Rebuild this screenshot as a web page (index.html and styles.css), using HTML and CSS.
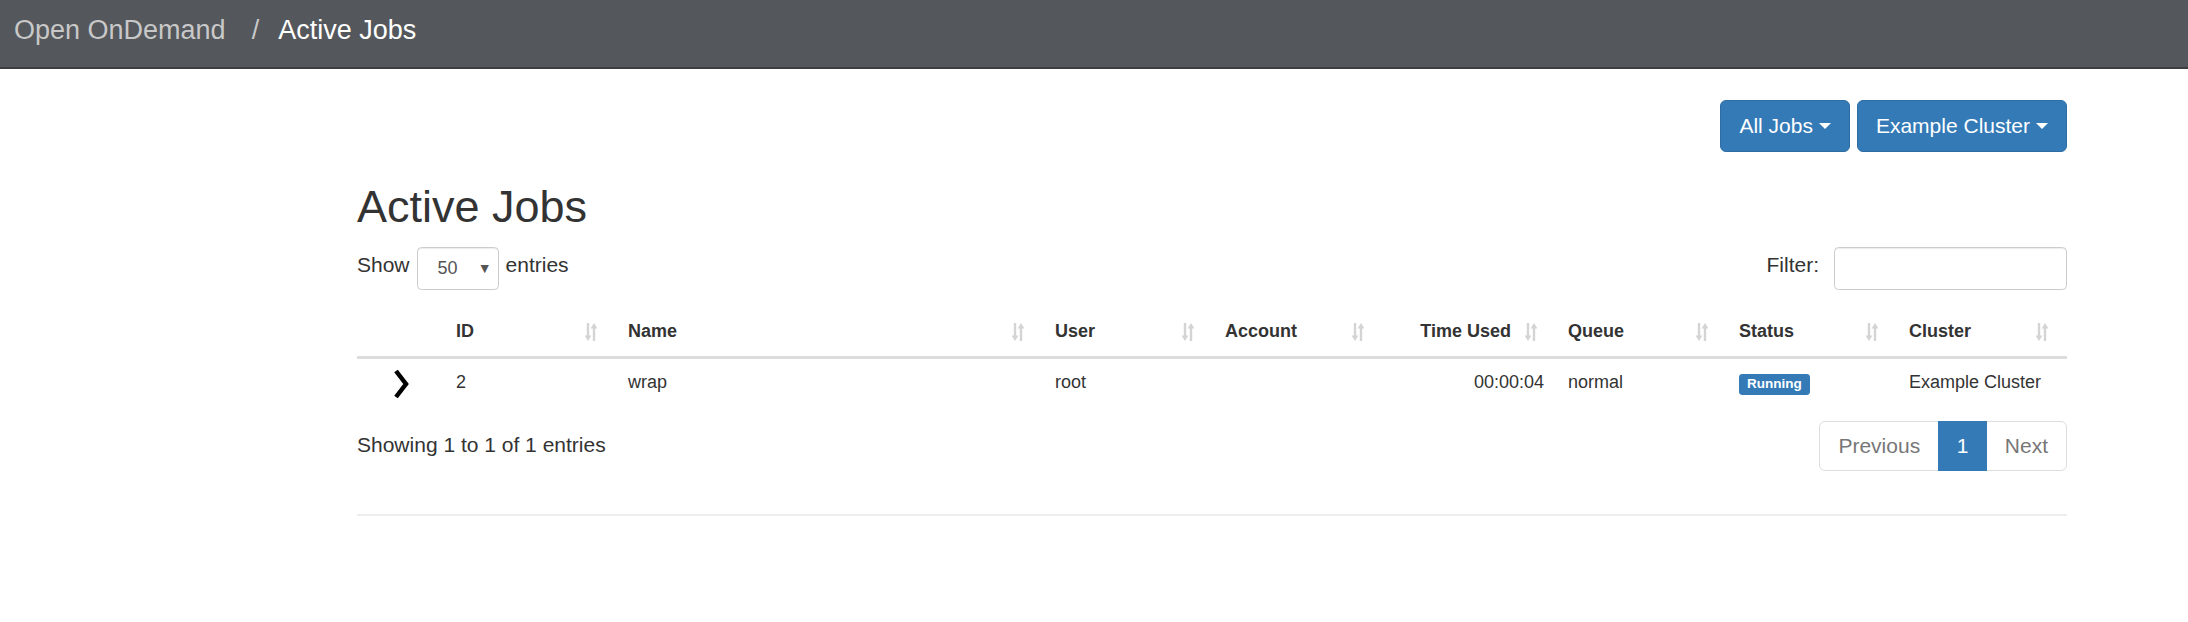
FILE: index.html
```html
<!DOCTYPE html>
<html lang="en">
<head>
<meta charset="utf-8">
<title>Active Jobs</title>
<link rel="stylesheet" href="styles.css">
</head>
<body>
<header class="navbar">
  <span class="brand">Open OnDemand</span><span class="sep">/</span><span class="crumb">Active Jobs</span>
</header>
<main class="container">
  <div class="toolbar">
    <button class="btn">All Jobs <span class="caret"></span></button>
    <button class="btn">Example Cluster <span class="caret"></span></button>
  </div>
  <h1 class="title">Active Jobs</h1>
  <div class="dt-controls">
    <div class="length"><span class="lbl">Show</span><span class="select"><span class="val">50</span><span class="arrow">▼</span></span><span class="lbl">entries</span></div>
    <div class="filter"><span class="lbl">Filter:</span><span class="input"></span></div>
  </div>
  <table class="jobs">
    <colgroup>
      <col class="c0"><col class="c1"><col class="c2"><col class="c3"><col class="c4"><col class="c5"><col class="c6"><col class="c7"><col class="c8">
    </colgroup>
    <thead>
      <tr>
        <th class="nosort"></th>
        <th>ID<svg class="sort" viewBox="0 0 12 18"><path d="M1.8 0h2.4v12.5h2.2L3 18 -0.4 12.5h2.2z M9 0 12.4 5.5H10.2V18H7.8V5.5H5.6z"/></svg></th>
        <th>Name<svg class="sort" viewBox="0 0 12 18"><path d="M1.8 0h2.4v12.5h2.2L3 18 -0.4 12.5h2.2z M9 0 12.4 5.5H10.2V18H7.8V5.5H5.6z"/></svg></th>
        <th>User<svg class="sort" viewBox="0 0 12 18"><path d="M1.8 0h2.4v12.5h2.2L3 18 -0.4 12.5h2.2z M9 0 12.4 5.5H10.2V18H7.8V5.5H5.6z"/></svg></th>
        <th>Account<svg class="sort" viewBox="0 0 12 18"><path d="M1.8 0h2.4v12.5h2.2L3 18 -0.4 12.5h2.2z M9 0 12.4 5.5H10.2V18H7.8V5.5H5.6z"/></svg></th>
        <th class="right">Time Used<svg class="sort" viewBox="0 0 12 18"><path d="M1.8 0h2.4v12.5h2.2L3 18 -0.4 12.5h2.2z M9 0 12.4 5.5H10.2V18H7.8V5.5H5.6z"/></svg></th>
        <th>Queue<svg class="sort" viewBox="0 0 12 18"><path d="M1.8 0h2.4v12.5h2.2L3 18 -0.4 12.5h2.2z M9 0 12.4 5.5H10.2V18H7.8V5.5H5.6z"/></svg></th>
        <th>Status<svg class="sort" viewBox="0 0 12 18"><path d="M1.8 0h2.4v12.5h2.2L3 18 -0.4 12.5h2.2z M9 0 12.4 5.5H10.2V18H7.8V5.5H5.6z"/></svg></th>
        <th>Cluster<svg class="sort" viewBox="0 0 12 18"><path d="M1.8 0h2.4v12.5h2.2L3 18 -0.4 12.5h2.2z M9 0 12.4 5.5H10.2V18H7.8V5.5H5.6z"/></svg></th>
      </tr>
    </thead>
    <tbody>
      <tr>
        <td class="toggle"><svg class="chev" viewBox="0 0 16 30"><polyline points="3,2 13,15 3,28"/></svg></td>
        <td>2</td>
        <td>wrap</td>
        <td>root</td>
        <td></td>
        <td class="right">00:00:04</td>
        <td>normal</td>
        <td><span class="label">Running</span></td>
        <td>Example Cluster</td>
      </tr>
    </tbody>
  </table>
  <div class="dt-footer">
    <div class="info">Showing 1 to 1 of 1 entries</div>
    <ul class="pagination">
      <li class="page disabled">Previous</li>
      <li class="page active">1</li>
      <li class="page disabled">Next</li>
    </ul>
  </div>
  <hr class="rule">
</main>
</body>
</html>
```
FILE: styles.css
```css
html, body {
  margin: 0;
  padding: 0;
  background: #ffffff;
}

body {
  font-family: "Liberation Sans", Arial, Helvetica, sans-serif;
  font-size: 21px;
  color: #333333;
}

.navbar {
  height: 60px;
  padding: 0 0 7px 14px;
  background: #54575c;
  border-bottom: 2px solid #3b3d41;
  display: flex;
  align-items: center;
  font-size: 27px;
  line-height: 60px;
}

.brand {
  color: #c8c8c8;
}

.sep {
  color: #c8c8c8;
  margin-left: 26px;
}

.crumb {
  color: #ffffff;
  margin-left: 19px;
}

.container {
  margin-left: 357px;
  width: 1710px;
}

.toolbar {
  display: flex;
  justify-content: flex-end;
  gap: 7px;
  margin-top: 31px;
}

.btn {
  font-family: inherit;
  font-size: 21px;
  color: #ffffff;
  background: #337ab7;
  border: 1.5px solid #2e6da4;
  border-radius: 6px;
  height: 52px;
  padding: 0 18px;
  display: inline-flex;
  align-items: center;
  gap: 6px;
}

.caret {
  display: inline-block;
  width: 0;
  height: 0;
  border-top: 6px solid #ffffff;
  border-left: 6px solid transparent;
  border-right: 6px solid transparent;
}

.title {
  font-size: 45px;
  font-weight: 500;
  line-height: 49.5px;
  margin: 30px 0 15px 0;
  color: #333333;
}

.dt-controls {
  display: flex;
  justify-content: space-between;
  align-items: center;
  height: 43px;
}

.length, .filter {
  display: flex;
  align-items: center;
  gap: 7px;
}

.filter {
  gap: 15px;
}

.lbl {
  margin-top: -6px;
}

.select {
  box-sizing: border-box;
  width: 82px;
  height: 43px;
  border: 1.5px solid #cccccc;
  border-radius: 4.5px;
  box-shadow: inset 0 1px 1px rgba(0, 0, 0, 0.075);
  display: flex;
  align-items: center;
  justify-content: space-between;
  padding: 0 6px 0 20px;
  font-size: 18px;
  color: #555555;
}

.arrow {
  font-size: 14px;
  color: #555555;
}

.input {
  box-sizing: border-box;
  width: 233px;
  height: 43px;
  border: 1.5px solid #cccccc;
  border-radius: 4.5px;
  box-shadow: inset 0 1px 1px rgba(0, 0, 0, 0.075);
}

.jobs {
  width: 1710px;
  table-layout: fixed;
  border-collapse: collapse;
  margin-top: 17px;
  font-size: 18px;
  line-height: 25.7px;
}

.c0 { width: 87px; }
.c1 { width: 172px; }
.c2 { width: 427px; }
.c3 { width: 170px; }
.c4 { width: 170px; }
.c5 { width: 173px; }
.c6 { width: 171px; }
.c7 { width: 170px; }
.c8 { width: 170px; }

.jobs th {
  position: relative;
  text-align: left;
  font-weight: bold;
  padding: 12px 45px 12px 12px;
  border-bottom: 3px solid #dddddd;
  white-space: nowrap;
}

.jobs th.nosort {
  padding-right: 12px;
}

.jobs .right {
  text-align: right;
}

.sort {
  position: absolute;
  right: 19px;
  top: 16px;
  width: 12px;
  height: 18px;
  fill: #d4d4d4;
}

.jobs td {
  padding: 11px 12px 9px 12px;
  vertical-align: middle;
}

.jobs td.toggle {
  text-align: center;
  padding-top: 6px;
  padding-bottom: 2px;
}

.chev {
  display: block;
  margin: 0 auto;
  width: 16px;
  height: 30px;
  fill: none;
  stroke: #000000;
  stroke-width: 4.5;
  stroke-linejoin: miter;
}

.label {
  display: inline-block;
  font-size: 13.5px;
  font-weight: bold;
  line-height: 1;
  color: #ffffff;
  background: #337ab7;
  padding: 3.5px 8.1px 4.5px 8.1px;
  border-radius: 3.4px;
  vertical-align: 0;
}

.dt-footer {
  display: flex;
  justify-content: space-between;
  align-items: flex-start;
  margin-top: 16px;
}

.info {
  padding-top: 9px;
  line-height: 30px;
}

.pagination {
  list-style: none;
  margin: 0;
  padding: 0;
  display: flex;
}

.page {
  padding: 0 18px;
  height: 48px;
  line-height: 48px;
  border: 1.5px solid #dddddd;
  color: #777777;
  background: #ffffff;
}

.page + .page {
  margin-left: -1.5px;
}

.page:first-child {
  border-radius: 6px 0 0 6px;
}

.page:last-child {
  border-radius: 0 6px 6px 0;
}

.page.active {
  background: #337ab7;
  border-color: #337ab7;
  color: #ffffff;
  position: relative;
}

.rule {
  margin: 43px 0 0 0;
  border: 0;
  border-top: 2px solid #eeeeee;
  height: 0;
}
```
